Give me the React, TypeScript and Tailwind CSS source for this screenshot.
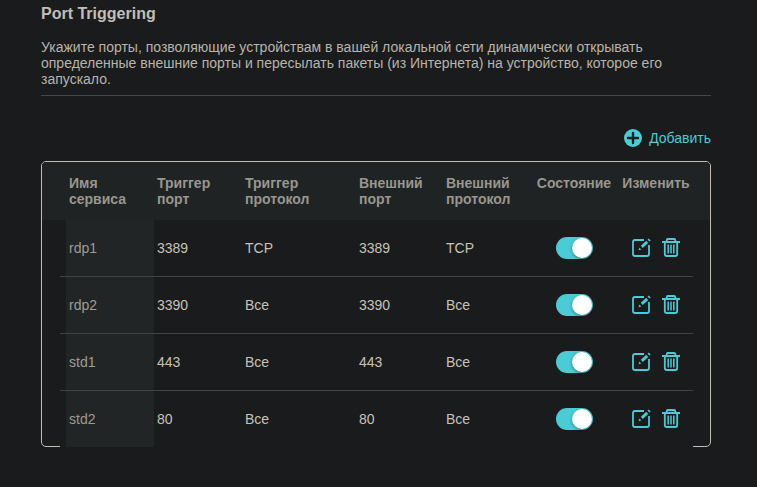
import { useState } from "react";

type Rule = {
  name: string;
  triggerPort: string;
  triggerProtocol: string;
  externalPort: string;
  externalProtocol: string;
  enabled: boolean;
};

const initialRules: Rule[] = [
  { name: "rdp1", triggerPort: "3389", triggerProtocol: "TCP", externalPort: "3389", externalProtocol: "TCP", enabled: true },
  { name: "rdp2", triggerPort: "3390", triggerProtocol: "Все", externalPort: "3390", externalProtocol: "Все", enabled: true },
  { name: "std1", triggerPort: "443", triggerProtocol: "Все", externalPort: "443", externalProtocol: "Все", enabled: true },
  { name: "std2", triggerPort: "80", triggerProtocol: "Все", externalPort: "80", externalProtocol: "Все", enabled: true },
];

function AddIcon() {
  return (
    <svg width="18" height="18" viewBox="0 0 18 18" aria-hidden="true">
      <circle cx="9" cy="9" r="9" fill="#4acbd6" />
      <path d="M9 4v10M4 9h10" stroke="#1a1b1c" strokeWidth="2.4" strokeLinecap="round" />
    </svg>
  );
}

function EditIcon() {
  return (
    <svg width="20" height="20" viewBox="0 0 20 20" fill="none" aria-hidden="true">
      <path d="M13 2H4Q2 2 2 4V16Q2 18 4 18H16Q18 18 18 16V7" stroke="#4acbd6" strokeWidth="1.8" />
      <path d="M10.8 8.9L16.2 3.9" stroke="#4acbd6" strokeWidth="2.8" />
      <path d="M7.6 12.2L8.3 9.6L10.3 11.5Z" fill="#4acbd6" />
      <path d="M17.1 1.1L19.1 3" stroke="#4acbd6" strokeWidth="1.7" />
    </svg>
  );
}

function TrashIcon() {
  return (
    <svg width="20" height="20" viewBox="0 0 20 20" fill="none" stroke="#4acbd6" aria-hidden="true">
      <path d="M1 4H19" strokeWidth="2" />
      <path d="M5.7 4V2.2Q5.7 1 6.9 1H13.1Q14.3 1 14.3 2.2V4" strokeWidth="1.8" />
      <path d="M3.8 5V16Q3.8 18 5.8 18H14.2Q16.2 18 16.2 16V5" strokeWidth="1.8" />
      <path d="M7.2 6.5V15.5M10 6.5V15.5M12.8 6.5V15.5" strokeWidth="1.5" />
    </svg>
  );
}

export default function App() {
  const [rules, setRules] = useState(initialRules);

  const toggle = (name: string) =>
    setRules(rules.map((r) => (r.name === name ? { ...r, enabled: !r.enabled } : r)));

  return (
    <main className="min-h-screen bg-[#1a1b1c] pt-1 pr-[46px] pl-[41px] font-['Liberation_Sans',Arial,sans-serif] text-sm leading-4 text-[#b8b4ab]">
      <h1 className="text-base leading-5 font-bold text-[#c2beb5]">Port Triggering</h1>
      <p className="mt-[15px] border-b border-[#444749] pb-2">
        Укажите порты, позволяющие устройствам в вашей локальной сети динамически открывать определенные внешние порты и
        пересылать пакеты (из Интернета) на устройство, которое его запускало.
      </p>

      <div className="mt-8 flex justify-end">
        <button type="button" className="flex h-5 items-center gap-[7px] text-[#4acbd6]">
          <AddIcon />
          Добавить
        </button>
      </div>

      <div className="mt-[13px] rounded-[5px] border border-[#c2beb5]">
        <table className="-mb-px w-full table-fixed border-separate border-spacing-0 text-left">
          <colgroup>
            <col className="w-[18px]" />
            <col className="w-[6px]" />
            <col className="w-[88px]" />
            <col className="w-[88px]" />
            <col className="w-[114px]" />
            <col className="w-[87px]" />
            <col className="w-[88px]" />
            <col className="w-[86px]" />
            <col className="w-[76px]" />
            <col className="w-[17px]" />
          </colgroup>
          <thead>
            <tr className="h-[58px] align-top text-[#999690] *:bg-[#1f2323] *:pt-[13px]">
              <td className="rounded-tl" />
              <td />
              <th scope="col" className="px-[3px]">Имя сервиса</th>
              <th scope="col" className="px-[3px]">Триггер порт</th>
              <th scope="col" className="pr-12 pl-[3px]">Триггер протокол</th>
              <th scope="col" className="px-[3px]">Внешний порт</th>
              <th scope="col" className="px-[3px]">Внешний протокол</th>
              <th scope="col" className="text-center">Состояние</th>
              <th scope="col" className="pl-0.5 text-center">Изменить</th>
              <td className="rounded-tr" />
            </tr>
          </thead>
          <tbody className="text-[#c6c2b9]">
            {rules.map((r) => (
              <tr
                key={r.name}
                className="h-[57px] last:h-14 [&:not(:last-child)>*:not(:first-child):not(:last-child)]:border-b [&:not(:last-child)>*:not(:first-child):not(:last-child)]:border-[#3f4344]"
              >
                <td />
                <td className="bg-[#1a1b1c]" />
                <th scope="row" className="bg-[#212525] px-[3px] font-normal text-[#9f9c95]">{r.name}</th>
                <td className="bg-[#1a1b1c] px-[3px]">{r.triggerPort}</td>
                <td className="bg-[#1a1b1c] px-[3px]">{r.triggerProtocol}</td>
                <td className="bg-[#1a1b1c] px-[3px]">{r.externalPort}</td>
                <td className="bg-[#1a1b1c] px-[3px]">{r.externalProtocol}</td>
                <td className="bg-[#1a1b1c]">
                  <label className="flex justify-center">
                    <input
                      type="checkbox"
                      aria-label={`Состояние ${r.name}`}
                      checked={r.enabled}
                      onChange={() => toggle(r.name)}
                      className="flex h-[22px] w-[37px] cursor-pointer appearance-none items-center rounded-full bg-[#55585a] px-px before:size-5 before:rounded-full before:bg-white before:shadow-[0_1px_3px_rgba(0,0,0,0.4)] checked:justify-end checked:bg-[#4acbd6]"
                    />
                  </label>
                </td>
                <td className="bg-[#1a1b1c] pl-0.5">
                  <div className="flex justify-center gap-[10px]">
                    <button type="button" aria-label={`Изменить ${r.name}`}>
                      <EditIcon />
                    </button>
                    <button type="button" aria-label={`Удалить ${r.name}`}>
                      <TrashIcon />
                    </button>
                  </div>
                </td>
                <td />
              </tr>
            ))}
          </tbody>
        </table>
      </div>
    </main>
  );
}
